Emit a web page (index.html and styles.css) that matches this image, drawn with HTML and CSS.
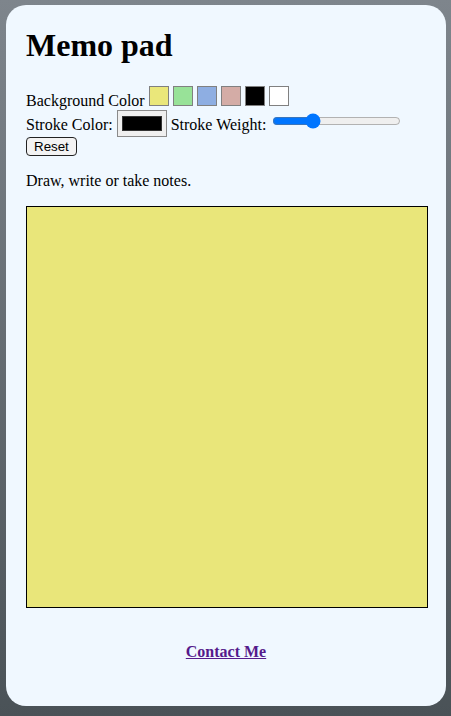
FILE: index.html
```html
<!DOCTYPE html>
<html lang="en">
<head>
<meta charset="utf-8">
<title>Memo pad</title>
<link rel="stylesheet" href="styles.css">
</head>
<body>
<div class="card">
  <h1 class="title">Memo pad</h1>
  <div class="controls">
    <div class="row row-bg">
      <span class="label">Background Color</span>
      <span class="swatch sw-yellow"></span>
      <span class="swatch sw-green"></span>
      <span class="swatch sw-blue"></span>
      <span class="swatch sw-pink"></span>
      <span class="swatch sw-black"></span>
      <span class="swatch sw-white"></span>
    </div>
    <div class="row row-stroke">
      <span class="label label-top">Stroke Color:</span>
      <input class="stroke-color" type="color" value="#000000">
      <span class="label label-top">Stroke Weight:</span>
      <input class="stroke-weight" type="range" min="1" max="50" value="15">
    </div>
    <div class="row row-reset">
      <button class="reset">Reset</button>
    </div>
  </div>
  <p class="hint">Draw, write or take notes.</p>
  <canvas class="pad" width="400" height="400"></canvas>
  <div class="footer"><a class="contact" href="#">Contact Me</a></div>
</div>
</body>
</html>
```
FILE: styles.css
```css
html, body {
  margin: 0;
  padding: 0;
}
body {
  height: 716px;
  background: linear-gradient(to bottom, #7e858c 0%, #4a5257 100%);
  font-family: "Liberation Serif", "Times New Roman", serif;
  font-size: 16px;
  color: #000;
  overflow: hidden;
}
.card {
  box-sizing: border-box;
  width: 440px;
  height: 701px;
  margin: 5px 0 0 6px;
  padding: 1px 20px 0 20px;
  background: #f0f8ff;
  border-radius: 20px;
}
.title {
  font-size: 32px;
  font-weight: bold;
  margin: 21.44px 0;
}
.row {
  display: flex;
  gap: 4px;
}
.row-bg {
  align-items: baseline;
}
.label {
  line-height: 18px;
  white-space: nowrap;
}
.row-stroke {
  align-items: flex-start;
  height: 27px;
}
.label-top {
  margin-top: 6px;
}
.swatch {
  display: block;
  box-sizing: border-box;
  width: 20px;
  height: 20px;
  border: 1px solid #808080;
}
.sw-yellow { background: #eae77a; }
.sw-green { background: #98e298; }
.sw-blue { background: #8eaee2; }
.sw-pink { background: #d4aca6; }
.sw-black { background: #000; }
.sw-white { background: #fff; }
.stroke-color {
  -webkit-appearance: none;
  appearance: none;
  box-sizing: border-box;
  width: 50px;
  height: 27px;
  margin: 0;
  padding: 1px 2px;
  border: 1px solid #8a8a8a;
  background: #efefef;
}
.stroke-color::-webkit-color-swatch-wrapper {
  padding: 4px 2px;
}
.stroke-color::-webkit-color-swatch {
  border: 1px solid #333;
}
.stroke-weight {
  width: 129px;
  height: 16px;
  margin: 3px 2px 0 2px;
  padding: 0;
}
.row-reset {
  height: 19px;
}
.reset {
  box-sizing: border-box;
  height: 19px;
  margin: 0;
  padding: 1px 7px;
  font-family: "Liberation Sans", Arial, sans-serif;
  font-size: 13.33px;
  color: #000;
  background: #f3f3f3;
  border: 1px solid #222;
  border-radius: 4px;
}
.hint {
  margin: 16px 0;
}
.pad {
  display: block;
  border: 1px solid #000;
  background: #e9e67a;
}
.footer {
  margin-top: 35px;
  text-align: center;
  font-weight: bold;
}
.contact {
  color: #551a8b;
  text-decoration: underline;
}
```
